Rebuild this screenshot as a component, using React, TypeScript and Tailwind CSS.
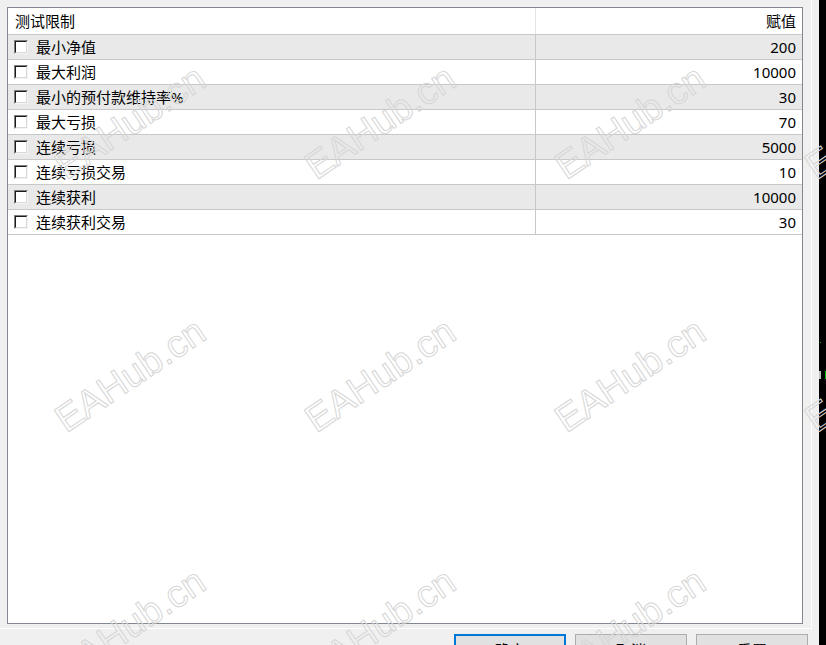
import React from "react";

const rows = [
  { label: "最小净值", value: "200" },
  { label: "最大利润", value: "10000" },
  { label: "最小的预付款维持率%", value: "30" },
  { label: "最大亏损", value: "70" },
  { label: "连续亏损", value: "5000" },
  { label: "连续亏损交易", value: "10" },
  { label: "连续获利", value: "10000" },
  { label: "连续获利交易", value: "30" },
];

// watermark anchors (centre of each rotated label)
const marks = [
  "left-[130px] top-[122px]",
  "left-[380px] top-[122px]",
  "left-[630px] top-[122px]",
  "left-[880px] top-[122px]",
  "left-[130px] top-[375px]",
  "left-[380px] top-[375px]",
  "left-[630px] top-[375px]",
  "left-[880px] top-[375px]",
  "left-[130px] top-[625px]",
  "left-[380px] top-[625px]",
  "left-[630px] top-[625px]",
];

function Checkbox() {
  return (
    <div className="w-[14px] h-[14px] flex-shrink-0 border border-t-[#808080] border-l-[#808080] border-r-[#f4f4f4] border-b-[#f4f4f4]">
      <div className="w-full h-full bg-white border border-t-[#1a1a1a] border-l-[#1a1a1a] border-r-[#d8d8d8] border-b-[#d8d8d8]" />
    </div>
  );
}

export default function App() {
  return (
    <div className="relative w-[826px] h-[645px] overflow-hidden flex text-black text-[15px] font-['Noto_Sans','Noto_Sans_CJK_SC',sans-serif]">
      <div className="w-[819px] flex-shrink-0 bg-[#f0f0f0] flex flex-col">
        {/* Panel */}
        <div className="w-[812px] h-[629px] pt-[7px] pl-[7px] pr-[8px] pb-[4px] border-r border-b border-white">
          <div className="w-[796px] h-[617px] bg-white border border-[#828790] flex flex-col">
            {/* Header */}
            <div className="flex h-[27px] flex-shrink-0 border-b border-[#c8c8c8] leading-none">
              <div className="w-[528px] flex items-center pl-[7px] border-r border-[#e5e5e5]">测试限制</div>
              <div className="flex-1 flex items-center justify-end pr-[6px]">赋值</div>
            </div>
            {/* Rows */}
            {rows.map((row, i) => (
              <div
                key={row.label}
                className={`flex h-[25px] flex-shrink-0 border-b border-[#c8c8c8] leading-none ${i % 2 === 0 ? "bg-[#e9e9e9]" : "bg-white"}`}
              >
                <div className="w-[528px] flex items-center pl-[6px] gap-[8px] border-r border-[#c8c8c8]">
                  <Checkbox />
                  <span>{row.label}</span>
                </div>
                <div className="flex-1 flex items-center justify-end pr-[6px]">{row.value}</div>
              </div>
            ))}
          </div>
        </div>

        {/* Buttons */}
        <div className="flex gap-[9px] pl-[454px] pt-[5px]">
          <button className="w-[112px] h-[33px] flex-shrink-0 bg-[#e1e1e1] border-2 border-[#0078d7] flex items-center justify-center leading-none">确定</button>
          <button className="w-[112px] h-[33px] flex-shrink-0 bg-[#e1e1e1] border border-[#adadad] flex items-center justify-center leading-none">取消</button>
          <button className="w-[112px] h-[33px] flex-shrink-0 bg-[#e1e1e1] border border-[#adadad] flex items-center justify-center leading-none">重置</button>
        </div>
      </div>

      {/* Chart edge behind the dialog */}
      <div className="flex-1 bg-black flex flex-col">
        <div className="mt-[342px] ml-[1px] w-[1px] h-[1px] bg-[#00c000]" />
        <div className="mt-[28px] flex gap-[4px]">
          <div className="w-[2px] h-[8px] bg-[#c0c0c0]" />
          <div className="w-[1px] h-[8px] bg-[#00c000]" />
        </div>
      </div>

      {/* Watermarks */}
      {marks.map((pos) => (
        <div key={pos} className={`absolute pointer-events-none ${pos}`}>
          <span className="absolute -translate-x-1/2 -translate-y-1/2 -rotate-[34deg] whitespace-nowrap text-[38px] leading-none font-['Liberation_Sans',sans-serif] text-transparent [-webkit-text-stroke:1px_#d6d6d6]">
            EAHub.cn
          </span>
        </div>
      ))}
    </div>
  );
}
